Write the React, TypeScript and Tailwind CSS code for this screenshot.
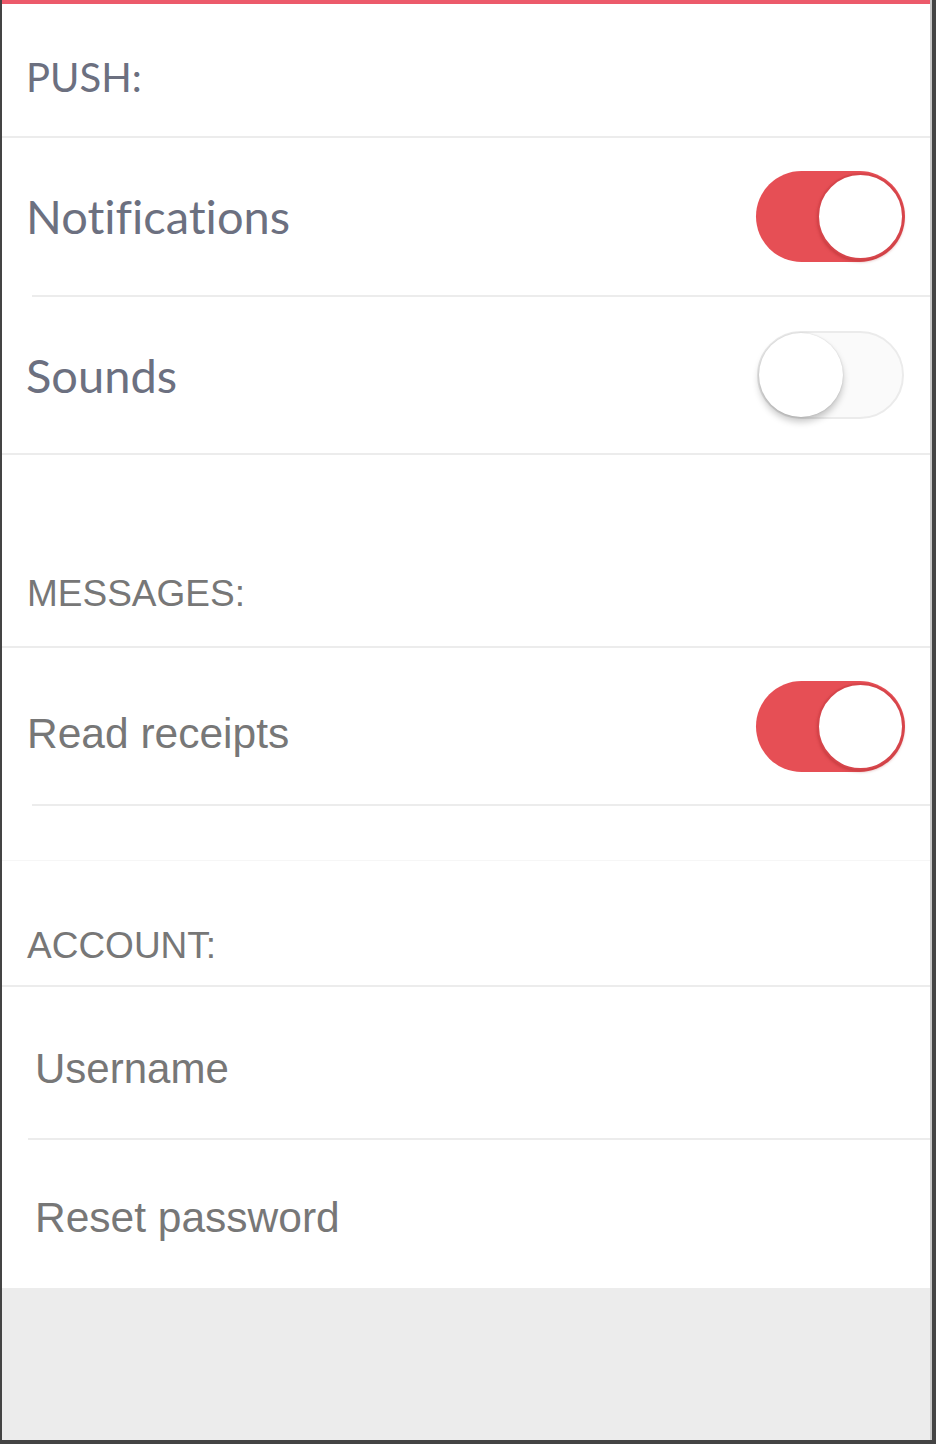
import React from "react";

function Toggle({ on }: { on: boolean }) {
  if (on) {
    return (
      <div className="relative w-[149px] h-[91px] rounded-full bg-[#e64f55]">
        <div className="absolute right-[1px] top-[2px] w-[87px] h-[87px] rounded-full bg-white border-[2px] border-[#d6454b] shadow-[0_2px_3px_rgba(150,30,30,0.35)]" />
      </div>
    );
  }
  return (
    <div className="relative w-[147px] h-[88px] rounded-full bg-[#fafafa] border-[2px] border-[#ebebeb]">
      <div className="absolute left-[0px] top-[0px] w-[84px] h-[84px] rounded-full bg-white shadow-[0_5px_7px_rgba(0,0,0,0.22),0_0_2px_rgba(0,0,0,0.15)]" />
    </div>
  );
}

const avenir = "font-['Lato','Noto_Sans',sans-serif] [font-variant-ligatures:none]";
const arial = "font-['Liberation_Sans',Arial,sans-serif]";

export default function App() {
  return (
    <div className="w-[936px] h-[1444px] bg-[#444] flex flex-col">
      <div className="flex-1 ml-[2px] mr-[4px] mb-[4px] flex flex-col bg-white border-r-[2px] border-[#c8c8c8] overflow-hidden">
        <div className="h-[4px] bg-[#ec5a6b] shrink-0" />

        {/* PUSH header */}
        <div className="h-[134px] shrink-0 flex items-center pl-[24px] pt-[14px] border-b-[2px] border-[#ececec]">
          <span className={`${avenir} text-[40px] text-[#6c7080] leading-none`}>PUSH:</span>
        </div>

        {/* Notifications */}
        <div className="h-[157px] shrink-0 flex items-center justify-between pl-[24px] pr-[25px]">
          <span className={`${avenir} text-[47px] text-[#6c7080] leading-none`}>Notifications</span>
          <Toggle on />
        </div>
        <div className="ml-[30px] h-[2px] shrink-0 bg-[#ececec]" />

        {/* Sounds */}
        <div className="h-[156px] shrink-0 flex items-center justify-between pl-[24px] pr-[26px]">
          <span className={`${avenir} text-[47px] text-[#6c7080] leading-none`}>Sounds</span>
          <Toggle on={false} />
        </div>
        <div className="h-[2px] shrink-0 bg-[#ececec]" />

        {/* MESSAGES header */}
        <div className="h-[193px] shrink-0 flex items-end pl-[25px] pb-[34px] border-b-[2px] border-[#ececec]">
          <span className={`${arial} text-[37px] text-[#777] leading-none`}>MESSAGES:</span>
        </div>

        {/* Read receipts */}
        <div className="h-[156px] shrink-0 flex items-center justify-between pl-[25px] pr-[25px]">
          <span className={`${arial} text-[42.5px] text-[#777] leading-none mt-[16px]`}>Read receipts</span>
          <Toggle on />
        </div>
        <div className="ml-[30px] h-[2px] shrink-0 bg-[#ececec]" />

        <div className="h-[55px] shrink-0 border-b border-[#f6f6f6]" />

        {/* ACCOUNT header */}
        <div className="h-[126px] shrink-0 flex items-end pl-[25px] pb-[21px] border-b-[2px] border-[#ececec]">
          <span className={`${arial} text-[37px] text-[#777] leading-none`}>ACCOUNT:</span>
        </div>

        {/* Username */}
        <div className="h-[151px] shrink-0 flex items-center pl-[33px] pt-[12px]">
          <span className={`${arial} text-[42px] text-[#777] leading-none`}>Username</span>
        </div>
        <div className="ml-[26px] h-[2px] shrink-0 bg-[#ececec]" />

        {/* Reset password */}
        <div className="h-[148px] shrink-0 flex items-center pl-[33px] pt-[8px]">
          <span className={`${arial} text-[42.5px] text-[#777] leading-none`}>Reset password</span>
        </div>

        <div className="flex-1 bg-[#ececec]" />
      </div>
    </div>
  );
}
